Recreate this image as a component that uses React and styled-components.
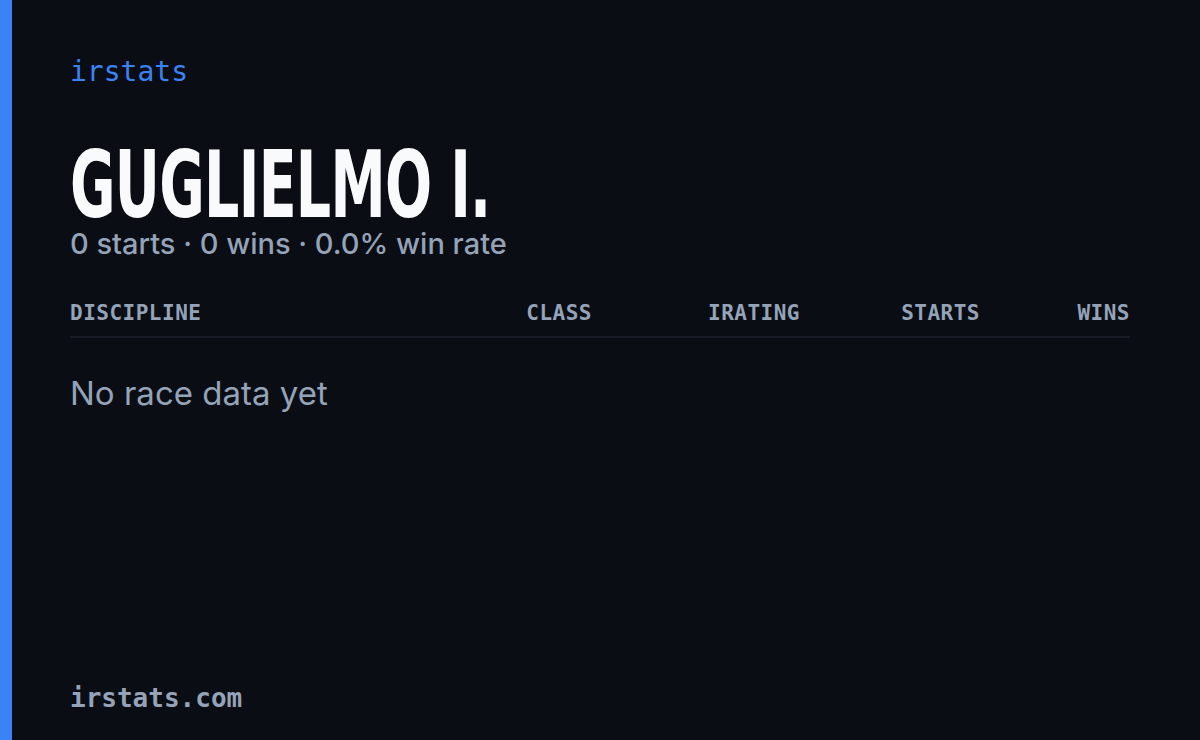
import React from 'react';
import styled, { createGlobalStyle } from 'styled-components';

const GlobalStyle = createGlobalStyle`
  html, body {
    margin: 0;
    padding: 0;
    background: #0a0d14;
  }
`;

const Card = styled.div`
  width: 1200px;
  height: 740px;
  display: flex;
  background: #0a0d14;
  overflow: hidden;
`;

const Accent = styled.div`
  width: 12px;
  flex-shrink: 0;
  background: #3b82f6;
`;

const Body = styled.div`
  flex: 1;
  display: flex;
  flex-direction: column;
  padding: 54px 70px 26px 58px;
`;

const Brand = styled.div`
  font-family: 'DejaVu Sans Mono', 'Liberation Mono', monospace;
  font-size: 28px;
  color: #3b82f6;
  line-height: 36px;
`;

const Name = styled.h1`
  margin: 58px 0 0;
  font-family: 'DejaVu Sans Condensed', 'DejaVu Sans', sans-serif;
  font-weight: 700;
  font-size: 92px;
  line-height: 76px;
  color: #f8fafc;
  transform: scaleX(0.67);
  transform-origin: left center;
  white-space: nowrap;
  letter-spacing: -1px;
`;

const Summary = styled.div`
  font-family: Inter, 'Open Sans', sans-serif;
  font-size: 29px;
  font-weight: 500;
  line-height: 40px;
  color: #94a3b8;
`;

const Table = styled.div`
  margin-top: 36px;
`;

const HeadRow = styled.div`
  display: grid;
  grid-template-columns: 1fr 150px 208px 180px 150px;
  padding-bottom: 10px;
  border-bottom: 2px solid #161b25;
`;

const HeadCell = styled.div`
  font-family: 'DejaVu Sans Mono', 'Liberation Mono', monospace;
  font-weight: 700;
  font-size: 21px;
  line-height: 26px;
  letter-spacing: 0.5px;
  color: #94a3b8;
  text-align: ${(p) => (p.$left ? 'left' : 'right')};
`;

const Empty = styled.div`
  margin-top: 33px;
  font-family: Inter, 'Open Sans', sans-serif;
  font-size: 33px;
  line-height: 44px;
  color: #94a3b8;
`;

const Footer = styled.div`
  margin-top: auto;
  font-family: 'DejaVu Sans Mono', 'Liberation Mono', monospace;
  font-weight: 700;
  font-size: 26px;
  line-height: 32px;
  color: #94a3b8;
`;

const columns = ['CLASS', 'IRATING', 'STARTS', 'WINS'];

export default function App() {
  return (
    <Card>
      <GlobalStyle />
      <Accent />
      <Body>
        <Brand>irstats</Brand>
        <Name>GUGLIELMO I.</Name>
        <Summary>0 starts · 0 wins · 0.0% win rate</Summary>
        <Table>
          <HeadRow>
            <HeadCell $left>DISCIPLINE</HeadCell>
            {columns.map((c) => (
              <HeadCell key={c}>{c}</HeadCell>
            ))}
          </HeadRow>
          <Empty>No race data yet</Empty>
        </Table>
        <Footer>irstats.com</Footer>
      </Body>
    </Card>
  );
}
